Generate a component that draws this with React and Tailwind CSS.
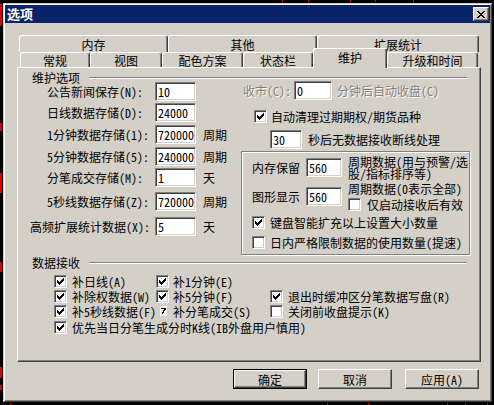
import React from "react";

const CHECK =
  "M6 0h1v1h-1z M5 1h2v1h-2z M0 2h1v1h-1z M4 2h3v1h-3z M0 3h2v1h-2z M3 3h3v1h-3z M0 4h5v1h-5z M1 5h3v1h-3z M2 6h1v1h-1z";

function CheckBox({ checked }) {
  return (
    <span className="flex h-[13px] w-[13px] shrink-0 items-center justify-center border border-t-[#808080] border-l-[#808080] border-b-white border-r-white bg-white shadow-[inset_1px_1px_0_#404040,inset_-1px_-1px_0_#d4d0c8]">
      {checked && (
        <svg width="7" height="7" viewBox="0 0 7 7" shapeRendering="crispEdges">
          <path d={CHECK} fill="#000" />
        </svg>
      )}
    </span>
  );
}

// half drawn box, as in the screenshot
function BrokenCheck() {
  return (
    <svg width="13" height="13" viewBox="0 0 13 13" className="shrink-0" shapeRendering="crispEdges">
      <rect x="4" y="1" width="7" height="10" fill="#f4f3ef" />
      <path d="M5 3h5v1h-5z M8 4h2v1h-2z M7 5h2v1h-2z M7 6h1v1h-1z M6 7h2v1h-2z M6 8h1v1h-1z" fill="#000" />
    </svg>
  );
}

function Field({ value, w }) {
  return (
    <div
      className={`${w} h-[19px] shrink-0 border border-t-[#808080] border-l-[#808080] border-b-white border-r-white bg-white pl-[2px] text-[12px] leading-[17px] shadow-[inset_1px_1px_0_#404040,inset_-1px_-1px_0_#d4d0c8]`}
    >
      {value}
    </div>
  );
}

function Btn({ children, def }) {
  const inner = (
    <div className="flex h-full w-full items-center justify-center border border-t-white border-l-white border-b-[#404040] border-r-[#404040] text-[12px] shadow-[inset_-1px_-1px_0_#808080]">
      {children}
    </div>
  );
  if (def) return <div className="h-[20px] w-[74px] border border-black">{inner}</div>;
  return <div className="h-[20px] w-[74px]">{inner}</div>;
}

function BackTab({ label, w }) {
  return (
    <div
      className={`${w} flex h-[17px] items-center justify-center rounded-t-[3px] border-t border-l border-r border-t-white border-l-white border-r-[#404040] shadow-[inset_-1px_0_0_#808080]`}
    >
      {label}
    </div>
  );
}

function FrontTab({ label, w, sel }) {
  if (sel) {
    return (
      <div
        className={`${w} relative z-10 -mt-[4px] flex h-[20px] items-center justify-center rounded-t-[3px] border-t border-l border-r border-t-white border-l-white border-r-[#404040] bg-[#d4d0c8] pb-[2px] shadow-[inset_-1px_0_0_#808080]`}
      >
        {label}
      </div>
    );
  }
  return (
    <div
      className={`${w} flex h-[15px] items-center justify-center rounded-t-[3px] border-t border-l border-r border-t-white border-l-white border-r-[#404040] shadow-[inset_-1px_0_0_#808080]`}
    >
      {label}
    </div>
  );
}

function Header({ label }) {
  return (
    <div className="flex h-[14px] items-center">
      <span className="pl-[14px] pr-[9px] leading-[12px]">{label}</span>
      <div className="mr-[13px] h-[2px] flex-1 border-t border-b border-t-[#808080] border-b-white" />
    </div>
  );
}

function LeftRow({ label, value, unit, mt, wide }) {
  return (
    <div className={`flex h-[19px] items-center ${mt}`}>
      {wide ? (
        <span className="ml-[12px] w-[125px] whitespace-nowrap">{label}</span>
      ) : (
        <span className="ml-[29px] w-[108px] whitespace-nowrap">{label}</span>
      )}
      <Field value={value} w="w-[41px]" />
      {unit && <span className="ml-[7px]">{unit}</span>}
    </div>
  );
}

function CheckItem({ checked, label, gap }) {
  return (
    <div className="flex h-[13px] items-center whitespace-nowrap">
      <CheckBox checked={checked} />
      <span className={gap}>{label}</span>
    </div>
  );
}

const gray = "text-[#808080] [text-shadow:1px_1px_0_#fff]";

export default function App() {
  return (
    <div className="relative h-[405px] w-[494px] overflow-hidden bg-black font-['Noto_Sans_Mono_CJK_SC','Noto_Sans_CJK_SC','Noto_Sans',sans-serif] text-[12px] leading-[13px] text-black">
      {/* desktop marks */}
      <span className="absolute left-0 top-[4px] h-[22px] w-[2px] bg-[#e00000]" />
      <span className="absolute left-0 top-[123px] h-[8px] w-[2px] bg-[#e00000]" />
      <span className="absolute left-0 top-[173px] h-[20px] w-[2px] bg-[#e00000]" />
      <span className="absolute left-0 top-[262px] h-[10px] w-[2px] bg-[#e00000]" />
      <span className="absolute left-0 top-[367px] h-[11px] w-[2px] bg-[#e00000]" />
      <span className="absolute left-0 top-[385px] h-[5px] w-[2px] bg-[#e00000]" />
      <span className="absolute left-[282px] top-0 h-[2px] w-[1px] bg-[#e00000]" />
      <span className="absolute left-[308px] top-0 h-[2px] w-[1px] bg-[#e00000]" />
      <span className="absolute left-[350px] top-0 h-[2px] w-[1px] bg-[#e00000]" />
      <span className="absolute left-[375px] top-0 h-[2px] w-[1px] bg-[#e00000]" />
      <span className="absolute left-[413px] top-0 h-[2px] w-[1px] bg-[#e00000]" />
      <span className="absolute left-[10px] bottom-0 h-[2px] w-[1px] bg-[#e00000]" />
      <span className="absolute left-[327px] bottom-0 h-[2px] w-[1px] bg-[#e00000]" />
      <span className="absolute left-[368px] bottom-0 h-[2px] w-[1px] bg-[#e00000]" />
      <span className="absolute left-[447px] bottom-0 h-[2px] w-[1px] bg-[#e00000]" />
      <span className="absolute left-[465px] bottom-0 h-[2px] w-[1px] bg-[#e00000]" />
      <span className="absolute left-[487px] bottom-0 h-[2px] w-[1px] bg-[#e00000]" />

      {/* window */}
      <div className="absolute left-[3px] top-[3px] flex h-[399px] w-[489px] flex-col bg-[#d4d0c8] p-[2px] shadow-[inset_1px_1px_0_#d4d0c8,inset_-1px_-1px_0_#404040,inset_2px_2px_0_#fff,inset_-2px_-2px_0_#808080]">
        {/* title bar */}
        <div className="flex h-[18px] items-center justify-between bg-[#0a246a] pl-[2px] pr-[1px]">
          <span className="font-['Noto_Sans_CJK_SC',sans-serif] text-[13px] font-bold leading-[16px] text-white">选项</span>
          <div className="flex h-[14px] w-[16px] items-center justify-center border border-t-white border-l-white border-b-[#404040] border-r-[#404040] bg-[#d4d0c8] shadow-[inset_-1px_-1px_0_#808080]">
            <svg width="8" height="7" viewBox="0 0 8 7" shapeRendering="crispEdges">
              <path
                d="M0 0h2v1h-2z M6 0h2v1h-2z M1 1h2v1h-2z M5 1h2v1h-2z M2 2h4v1h-4z M3 3h2v1h-2z M2 4h4v1h-4z M1 5h2v1h-2z M5 5h2v1h-2z M0 6h2v1h-2z M6 6h2v1h-2z"
                fill="#000"
              />
            </svg>
          </div>
        </div>

        {/* tabs + panel */}
        <div className="ml-[12px] mt-[12px] w-[464px]">
          <div className="ml-[2px] flex">
            <BackTab label="内存" w="w-[149px]" />
            <BackTab label="其他" w="w-[149px]" />
            <BackTab label="扩展统计" w="w-[162px]" />
          </div>
          <div className="ml-[3px] flex h-[15px] items-start">
            <FrontTab label="常规" w="w-[70px]" />
            <FrontTab label="视图" w="w-[72px]" />
            <FrontTab label="配色方案" w="w-[81px]" />
            <FrontTab label="状态栏" w="w-[70px]" />
            <FrontTab label="维护" w="w-[74px]" sel />
            <FrontTab label="升级和时间" w="w-[91px]" />
          </div>

          <div className="h-[295px] w-[464px] border border-t-white border-l-white border-b-[#404040] border-r-[#404040] shadow-[inset_-1px_-1px_0_#808080]">
            <div className="mt-[3px]">
              <Header label="维护选项" />
            </div>

            <div className="-mt-[4px] flex">
              {/* left column */}
              <div className="w-[223px] shrink-0">
                <LeftRow label="公告新闻保存(N):" value="10" mt="mt-[1px]" />
                <LeftRow label="日线数据存储(D):" value="24000" mt="mt-[2px]" />
                <LeftRow label="1分钟数据存储(1):" value="720000" unit="周期" mt="mt-[3px]" />
                <LeftRow label="5分钟数据存储(5):" value="240000" unit="周期" mt="mt-[3px]" />
                <LeftRow label="分笔成交存储(M):" value="1" unit="天" mt="mt-[2px]" />
                <LeftRow label="5秒线数据存储(Z):" value="720000" unit="周期" mt="mt-[5px]" />
                <LeftRow label="高频扩展统计数据(X):" value="5" unit="天" mt="mt-[6px]" wide />
              </div>

              {/* right column */}
              <div className="flex-1">
                <div className="flex h-[19px] items-center">
                  <span className={`ml-[2px] w-[51px] whitespace-nowrap ${gray}`}>收市(C):</span>
                  <Field value="0" w="w-[38px]" />
                  <span className={`ml-[5px] whitespace-nowrap ${gray}`}>分钟后自动收盘(C)</span>
                </div>
                <div className="ml-[13px] mt-[10px]">
                  <CheckItem checked label="自动清理过期期权/期货品种" gap="ml-[4px]" />
                </div>
                <div className="ml-[29px] mt-[7px] flex h-[19px] items-center">
                  <Field value="30" w="w-[32px]" />
                  <span className="ml-[6px] whitespace-nowrap">秒后无数据接收断线处理</span>
                </div>

                <div className="mt-[2px] h-[104px] w-[229px] border border-[#808080] shadow-[inset_1px_1px_0_#fff,1px_1px_0_#fff]">
                  <div className="mt-[6px] flex h-[19px] items-center">
                    <span className="ml-[10px] w-[54px] whitespace-nowrap">内存保留</span>
                    <Field value="560" w="w-[36px]" />
                    <div className="ml-[6px] whitespace-nowrap leading-[12px]">
                      <div>周期数据(用与预警/选</div>
                      <div>股/指标排序等)</div>
                    </div>
                  </div>
                  <div className="mt-[6px] flex items-start">
                    <div className="mt-[4px] flex h-[19px] items-center">
                      <span className="ml-[10px] w-[54px] whitespace-nowrap">图形显示</span>
                      <Field value="560" w="w-[36px]" />
                    </div>
                    <div className="ml-[6px]">
                      <div className="h-[12px] whitespace-nowrap leading-[12px]">周期数据(0表示全部)</div>
                      <div className="mt-[3px]">
                        <CheckItem label="仅启动接收后有效" gap="ml-[6px]" />
                      </div>
                    </div>
                  </div>
                  <div className="ml-[10px] mt-[5px]">
                    <CheckItem checked label="键盘智能扩充以上设置大小数量" gap="ml-[5px]" />
                  </div>
                  <div className="ml-[10px] mt-[7px]">
                    <CheckItem label="日内严格限制数据的使用数量(提速)" gap="ml-[5px]" />
                  </div>
                </div>
              </div>
            </div>

            <div className="mt-[1px]">
              <Header label="数据接收" />
            </div>

            <div className="ml-[36px] mt-[5px] flex flex-col">
              <div className="flex">
                <div className="w-[102px]">
                  <CheckItem checked label="补日线(A)" gap="ml-[5px]" />
                </div>
                <div className="w-[114px]">
                  <CheckItem checked label="补1分钟(E)" gap="ml-[4px]" />
                </div>
              </div>
              <div className="mt-[2px] flex">
                <div className="w-[102px]">
                  <CheckItem checked label="补除权数据(W)" gap="ml-[5px]" />
                </div>
                <div className="w-[114px]">
                  <CheckItem checked label="补5分钟(F)" gap="ml-[4px]" />
                </div>
                <CheckItem checked label="退出时缓冲区分笔数据写盘(R)" gap="ml-[5px]" />
              </div>
              <div className="mt-[2px] flex">
                <div className="w-[102px]">
                  <CheckItem checked label="补5秒线数据(F)" gap="ml-[5px]" />
                </div>
                <div className="flex h-[13px] w-[114px] items-center whitespace-nowrap">
                  <BrokenCheck />
                  <span className="ml-[4px]">补分笔成交(S)</span>
                </div>
                <CheckItem label="关闭前收盘提示(K)" gap="ml-[5px]" />
              </div>
              <div className="mt-[3px]">
                <CheckItem checked label="优先当日分笔生成分时K线(IB外盘用户慎用)" gap="ml-[5px]" />
              </div>
            </div>
          </div>
        </div>

        {/* buttons */}
        <div className="mr-[11px] mt-[7px] flex justify-end">
          <Btn def>确定</Btn>
          <div className="ml-[11px]">
            <Btn>取消</Btn>
          </div>
          <div className="ml-[13px]">
            <Btn>应用(A)</Btn>
          </div>
        </div>
      </div>
    </div>
  );
}
